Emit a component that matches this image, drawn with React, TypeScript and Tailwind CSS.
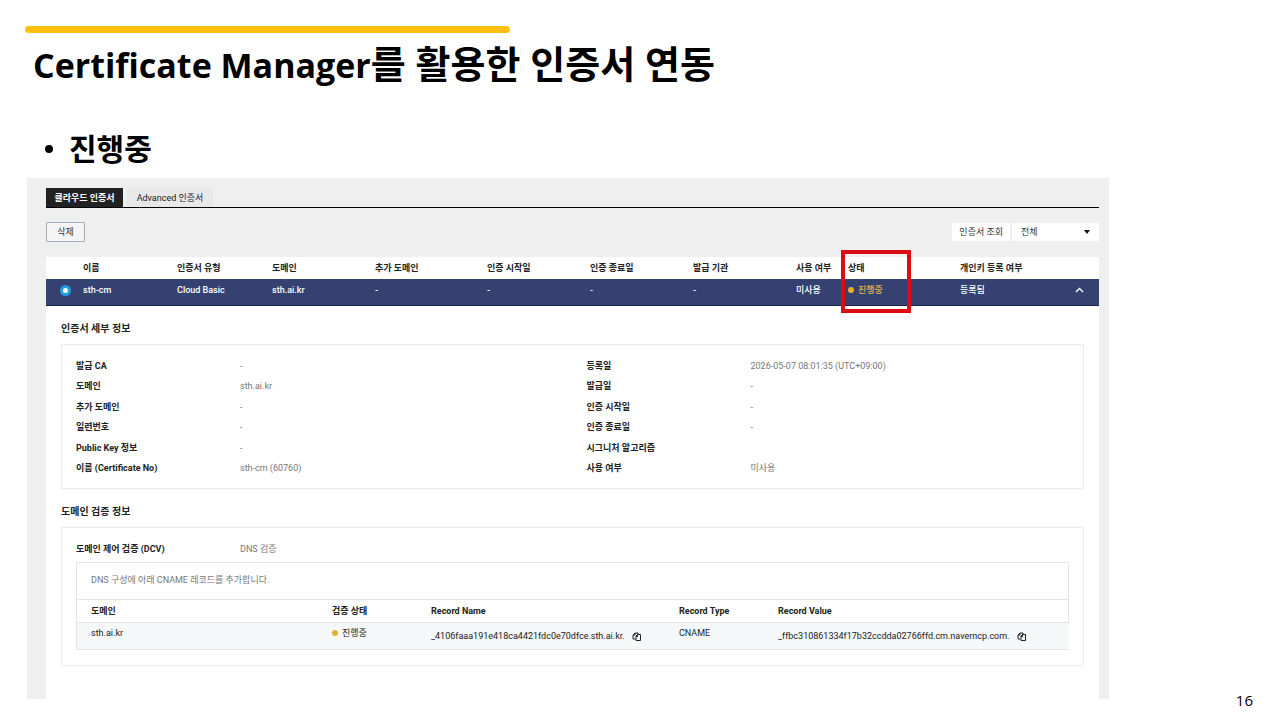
import React, { ReactNode, useState } from "react";

interface Field {
  label: string;
  value: string;
}

const listColumns = [
  { title: "", width: "w-[32px]" },
  { title: "이름", width: "w-[94px]" },
  { title: "인증서 유형", width: "w-[95px]" },
  { title: "도메인", width: "w-[103px]" },
  { title: "추가 도메인", width: "w-[112px]" },
  { title: "인증 시작일", width: "w-[103px]" },
  { title: "인증 종료일", width: "w-[103px]" },
  { title: "발급 기관", width: "w-[103px]" },
  { title: "사용 여부", width: "w-[52px]" },
  { title: "상태", width: "w-[112px]", highlighted: true },
  { title: "개인키 등록 여부", width: "w-[105px]" },
  { title: "", width: "w-[39px]" },
];

const recordColumns = [
  { title: "도메인", width: "w-[248px]" },
  { title: "검증 상태", width: "w-[99px]" },
  { title: "Record Name", width: "w-[248px]" },
  { title: "Record Type", width: "w-[99px]" },
  { title: "Record Value", width: "w-[298px]" },
];

const leftFields: Field[] = [
  { label: "발급 CA", value: "-" },
  { label: "도메인", value: "sth.ai.kr" },
  { label: "추가 도메인", value: "-" },
  { label: "일련번호", value: "-" },
  { label: "Public Key 정보", value: "-" },
  { label: "이름 (Certificate No)", value: "sth-cm (60760)" },
];

const rightFields: Field[] = [
  { label: "등록일", value: "2026-05-07 08:01:35 (UTC+09:00)" },
  { label: "발급일", value: "-" },
  { label: "인증 시작일", value: "-" },
  { label: "인증 종료일", value: "-" },
  { label: "시그니처 알고리즘", value: "" },
  { label: "사용 여부", value: "미사용" },
];

const CopyIcon = () => (
  <svg className="size-[9px]" viewBox="0 0 18 18" fill="none" stroke="currentColor" strokeWidth="2">
    <path d="M7 14H2V6l4-4h6v3" />
    <path d="M6 2v4H2" />
    <path d="M11 5h6v12H8V8z" />
    <path d="M11 5v4H8" />
  </svg>
);

const Status = ({ label }: { label: string }) => (
  <span className="flex items-center gap-1">
    <span className="size-[6px] rounded-full bg-[#e5b02c]" />
    {label}
  </span>
);

const CopyValue = ({ value }: { value: string }) => (
  <span className="flex items-center gap-[7px]">
    {value}
    <button type="button" aria-label="복사" className="text-[#222222]">
      <CopyIcon />
    </button>
  </span>
);

const FieldList = ({ fields }: { fields: Field[] }) => (
  <dl className="grid min-h-[123px] auto-rows-fr pl-[14px]">
    {fields.map((field) => (
      <div key={field.label} className="flex items-center">
        <dt className="w-[164px] shrink-0 font-bold text-[#222222]">{field.label}</dt>
        <dd className="text-[#777777]">{field.value}</dd>
      </div>
    ))}
  </dl>
);

const Section = ({ title, children }: { title: string; children: ReactNode }) => (
  <section>
    <h3 className="mb-[7px] text-[10px] leading-4 font-bold text-[#222222]">{title}</h3>
    <div className="border border-[#ededed]">{children}</div>
  </section>
);

const CertificateList = () => {
  const [selected, setSelected] = useState(true);

  return (
    <table className="w-full table-fixed text-left">
      <colgroup>
        {listColumns.map((col, i) => (
          <col key={i} className={col.width} />
        ))}
      </colgroup>
      <thead>
        <tr className="h-[22px] bg-white text-[#222222]">
          {listColumns.map((col, i) => (
            <th key={i} className="relative pl-[5px] font-bold whitespace-nowrap">
              {col.title}
              {/* Red marker around the status column */}
              {col.highlighted && (
                <span className="pointer-events-none absolute -top-[7px] -left-[2px] z-10 h-[63px] w-[70px] border-4 border-[#dd0b12]" />
              )}
            </th>
          ))}
        </tr>
      </thead>
      <tbody>
        <tr className="h-[26px] border-b border-[#17234f] bg-[#354271] font-medium text-white [&>td]:pb-[3px] [&>td]:pl-[5px]">
          <td>
            <input
              type="radio"
              aria-label="sth-cm"
              checked={selected}
              onChange={() => setSelected(true)}
              className="ml-[9px] block size-[11px] appearance-none rounded-full border-[3px] border-[#1d9fe0] bg-white"
            />
          </td>
          <td>sth-cm</td>
          <td>Cloud Basic</td>
          <td>sth.ai.kr</td>
          <td>-</td>
          <td>-</td>
          <td>-</td>
          <td>-</td>
          <td>미사용</td>
          <td className="text-[#e5b04a]">
            <Status label="진행중" />
          </td>
          <td>등록됨</td>
          <td>
            <button type="button" aria-label="접기" className="ml-[10px] block">
              <svg className="h-[6px] w-[9px]" viewBox="0 0 9 6" fill="none" stroke="currentColor" strokeWidth="1.4">
                <path d="M1 5l3.500-3.500L8 5" />
              </svg>
            </button>
          </td>
        </tr>
      </tbody>
    </table>
  );
};

const RecordTable = () => (
  <table className="w-full table-fixed text-left text-[#222222]">
    <colgroup>
      {recordColumns.map((col) => (
        <col key={col.title} className={col.width} />
      ))}
    </colgroup>
    <thead>
      <tr className="h-[23px] border-y border-[#e5e5e5]">
        {recordColumns.map((col) => (
          <th key={col.title} className="pl-[7px] font-bold first:pl-[14px]">
            {col.title}
          </th>
        ))}
      </tr>
    </thead>
    <tbody>
      <tr className="h-[27px] bg-[#f5f7f8] align-top [&>td]:pt-1 [&>td]:pl-[7px] [&>td:first-child]:pl-[14px]">
        <td>sth.ai.kr</td>
        <td>
          <Status label="진행중" />
        </td>
        <td className="pb-[3px] align-middle">
          <CopyValue value="_4106faaa191e418ca4421fdc0e70dfce.sth.ai.kr." />
        </td>
        <td>CNAME</td>
        <td className="pb-[3px] align-middle">
          <CopyValue value="_ffbc310861334f17b32ccdda02766ffd.cm.naverncp.com." />
        </td>
      </tr>
    </tbody>
  </table>
);

export default function App() {
  const [filter, setFilter] = useState("all");

  return (
    <main className="flex min-h-screen flex-col bg-white font-['Open_Sans','Noto_Sans_CJK_KR',sans-serif] text-black">
      <header className="pt-[26px] pl-[25px]">
        <div className="h-[7px] w-[485px] rounded-sm bg-[#ffc10e]" />
        <h1 className="mt-1 pl-2 text-[34px] leading-[56px] font-bold">
          Certificate Manager<span className="text-[38px] leading-none">를 활용한 인증서 연동</span>
        </h1>
        <h2 className="mt-[34px] flex items-center gap-4 pl-5 text-[30px] leading-[44px] font-bold">
          <span className="size-2 rounded-full bg-black" />
          진행중
        </h2>
      </header>

      <div className="mt-[7px] flex flex-1">
        <div className="ml-[27px] min-w-0 flex-1 self-start bg-[#efefef] pt-[10px] pr-[10px] pl-[19px] font-['Roboto','Noto_Sans_CJK_KR',sans-serif] text-[9px] leading-3">
          {/* Tabs */}
          <nav className="flex gap-1 border-b border-black text-[#222222]">
            <button type="button" className="h-[19px] w-[77px] bg-[#222222] font-bold text-white">
              클라우드 인증서
            </button>
            <button type="button" className="h-[19px] w-[86px] bg-[#e8e8e8]">
              Advanced 인증서
            </button>
          </nav>

          {/* Toolbar */}
          <div className="mt-[14px] mb-[15px] flex items-center justify-between text-[#333333]">
            <button type="button" className="h-5 w-[39px] rounded-[1px] border border-[#a3adb9] bg-[#f4f5f6]">
              삭제
            </button>
            <div className="flex items-center gap-[2px]">
              <label htmlFor="cert-filter" className="h-[18px] bg-white px-[7px] leading-[18px]">
                인증서 조회
              </label>
              <div className="relative">
                <select
                  id="cert-filter"
                  value={filter}
                  onChange={(e) => setFilter(e.target.value)}
                  className="block h-[18px] w-[87px] appearance-none bg-white pl-[9px]"
                >
                  <option value="all">전체</option>
                </select>
                <svg className="pointer-events-none absolute top-[7px] right-[9px] h-[4px] w-[6px]" viewBox="0 0 6 4">
                  <path d="M0 0h6L3 4z" fill="#111111" />
                </svg>
              </div>
            </div>
          </div>

          <CertificateList />

          {/* Expanded certificate details */}
          <div className="flex flex-col gap-[15px] bg-white px-[15px] pt-[15px] pb-[33px]">
            <Section title="인증서 세부 정보">
              <div className="grid grid-cols-2 pt-[11px] pb-[9px]">
                <FieldList fields={leftFields} />
                <FieldList fields={rightFields} />
              </div>
            </Section>

            <Section title="도메인 검증 정보">
              <div className="px-[14px] py-[15px]">
                <dl className="flex">
                  <dt className="w-[164px] shrink-0 font-bold text-[#222222]">도메인 제어 검증 (DCV)</dt>
                  <dd className="text-[#777777]">DNS 검증</dd>
                </dl>
                <div className="mt-[7px] border border-[#e5e5e5]">
                  <p className="px-[14px] pt-[11px] pb-[13px] text-[#777777]">
                    DNS 구성에 아래 CNAME 레코드를 추가합니다.
                  </p>
                  <RecordTable />
                </div>
              </div>
            </Section>
          </div>
        </div>

        <footer className="w-[171px] self-end pr-[27px] pb-[9px] text-right text-[15px] leading-[22px]">16</footer>
      </div>
    </main>
  );
}
